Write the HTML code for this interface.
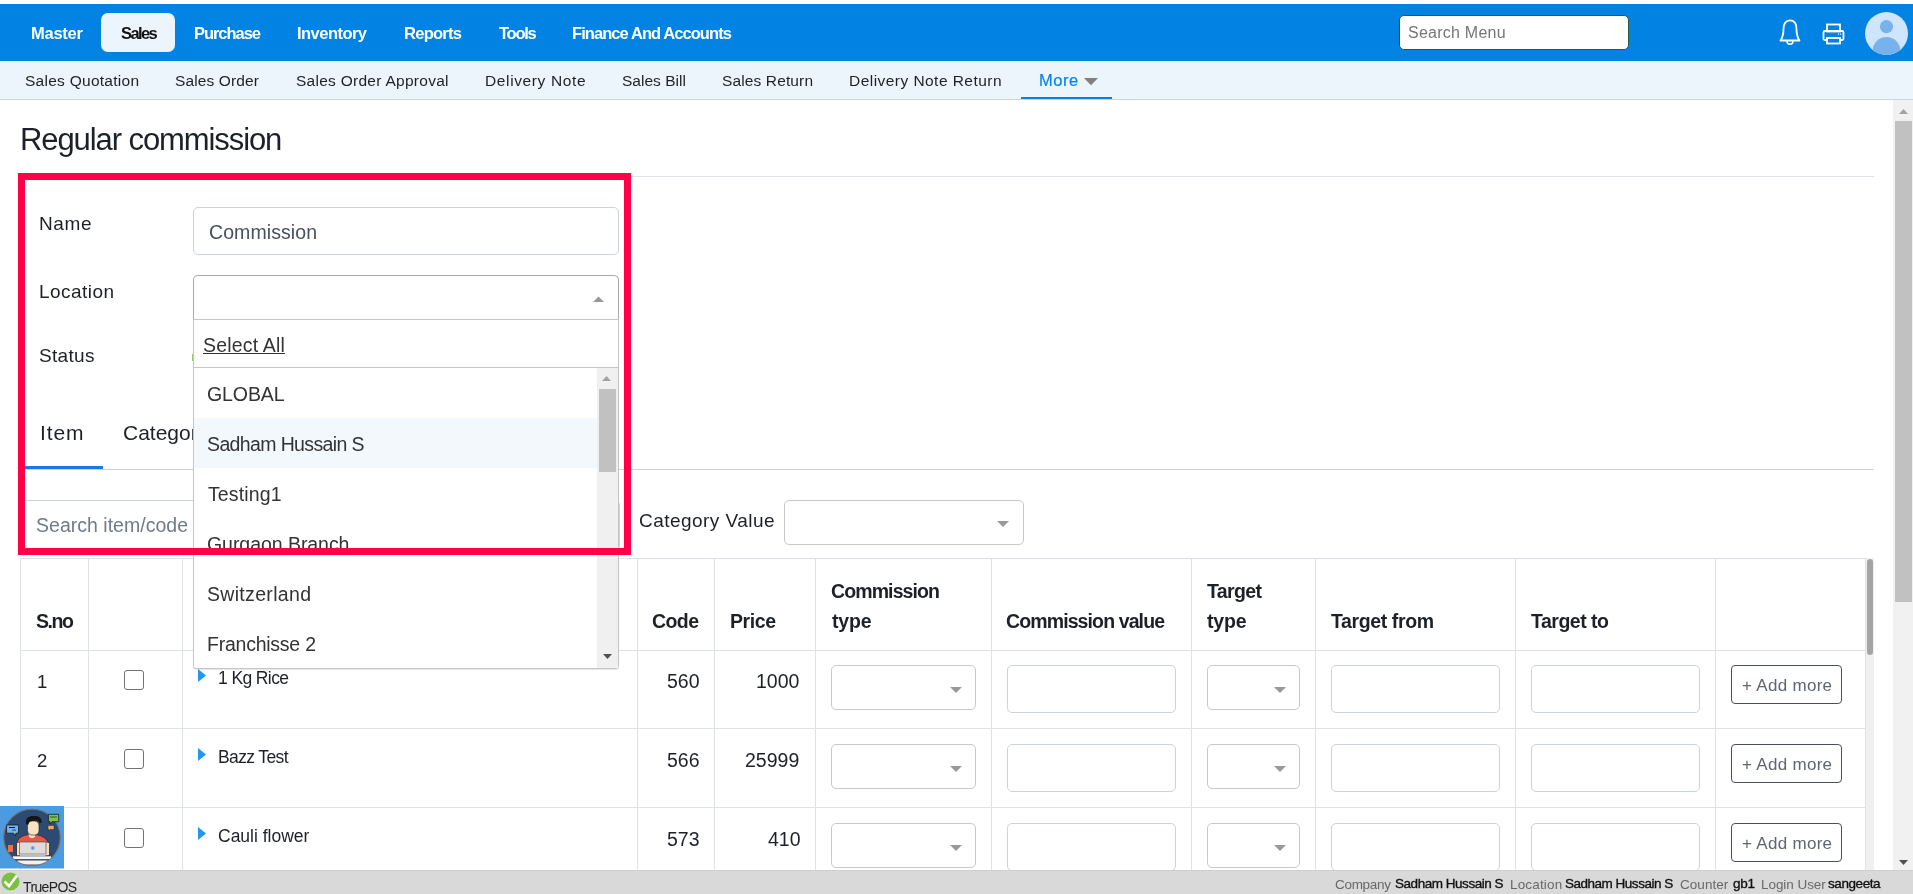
<!DOCTYPE html><html><head><meta charset="utf-8"><style>
html,body{margin:0;padding:0}
body{width:1913px;height:894px;overflow:hidden;position:relative;background:#fff;font-family:"Liberation Sans",sans-serif}
.a{position:absolute;box-sizing:border-box}
.t{position:absolute;white-space:nowrap;will-change:transform}
</style></head><body>
<div class="a" style="left:0px;top:4px;width:1913px;height:57px;background:#0283e4"></div>
<div class="a" style="left:101px;top:13px;width:74px;height:39px;background:#ecf4fc;border-radius:7px"></div>
<div class="t" style="left:31.00px;top:25.03px;font-size:16.5px;line-height:16.5px;font-weight:bold;letter-spacing:-0.243px;color:#ffffff;">Master</div>
<div class="t" style="left:194.00px;top:25.03px;font-size:16.5px;line-height:16.5px;font-weight:bold;letter-spacing:-1.047px;color:#ffffff;">Purchase</div>
<div class="t" style="left:297.00px;top:25.03px;font-size:16.5px;line-height:16.5px;font-weight:bold;letter-spacing:-0.531px;color:#ffffff;">Inventory</div>
<div class="t" style="left:404.00px;top:25.03px;font-size:16.5px;line-height:16.5px;font-weight:bold;letter-spacing:-0.728px;color:#ffffff;">Reports</div>
<div class="t" style="left:499.00px;top:25.03px;font-size:16.5px;line-height:16.5px;font-weight:bold;letter-spacing:-1.259px;color:#ffffff;">Tools</div>
<div class="t" style="left:572.00px;top:25.03px;font-size:16.5px;line-height:16.5px;font-weight:bold;letter-spacing:-0.928px;color:#ffffff;">Finance And Accounts</div>
<div class="t" style="left:121.00px;top:25.03px;font-size:16.5px;line-height:16.5px;font-weight:bold;letter-spacing:-1.612px;color:#111;">Sales</div>
<div class="a" style="left:1399px;top:15px;width:230px;height:35px;background:#fff;border:1px solid #2d5a43;border-radius:5px"></div>
<div class="t" style="left:1408.00px;top:25.26px;font-size:16px;line-height:16px;letter-spacing:0.240px;color:#757575;">Search Menu</div>
<svg class="a" style="left:1776px;top:17px" width="28" height="30" viewBox="0 0 28 30"><path d="M4.5 23.5 C7 20 7.5 17 7.5 12 C7.5 6.5 10 3.3 14 3.3 C18 3.3 20.5 6.5 20.5 12 C20.5 17 21 20 23.5 23.5 Z" fill="none" stroke="#fff" stroke-width="1.8" stroke-linejoin="round"/><path d="M11 24 A3 3.2 0 0 0 17 24" fill="none" stroke="#fff" stroke-width="1.6"/></svg>
<svg class="a" style="left:1820px;top:20px" width="28" height="28" viewBox="0 0 28 28"><rect x="7" y="4.5" width="13" height="7" fill="none" stroke="#fff" stroke-width="1.8"/><rect x="3.5" y="11" width="20" height="9" rx="1.5" fill="none" stroke="#fff" stroke-width="1.8"/><rect x="7" y="18" width="13" height="5.5" fill="#0283e4" stroke="#fff" stroke-width="1.8"/><rect x="18" y="13.5" width="1.2" height="1.2" fill="#fff"/><rect x="20" y="13.5" width="1.2" height="1.2" fill="#fff"/></svg>
<svg class="a" style="left:1865px;top:12px" width="43" height="43" viewBox="0 0 43 43"><defs><clipPath id="cc"><circle cx="21.5" cy="21.5" r="21.5"/></clipPath></defs><circle cx="21.5" cy="21.5" r="21.5" fill="#cfe5fb"/><g clip-path="url(#cc)"><circle cx="21.5" cy="14.6" r="6.6" fill="#78b2ec"/><ellipse cx="21.5" cy="39" rx="13.8" ry="14" fill="#78b2ec"/></g></svg>
<div class="a" style="left:0px;top:61px;width:1913px;height:39px;background:#ecf4fc;border-bottom:1px solid #c8d7e5"></div>
<div class="t" style="left:24.50px;top:72.88px;font-size:15.5px;line-height:15.5px;letter-spacing:0.266px;color:#1d2127;">Sales Quotation</div>
<div class="t" style="left:175.00px;top:72.88px;font-size:15.5px;line-height:15.5px;letter-spacing:0.131px;color:#1d2127;">Sales Order</div>
<div class="t" style="left:296.00px;top:72.88px;font-size:15.5px;line-height:15.5px;letter-spacing:0.272px;color:#1d2127;">Sales Order Approval</div>
<div class="t" style="left:485.00px;top:72.88px;font-size:15.5px;line-height:15.5px;letter-spacing:0.625px;color:#1d2127;">Delivery Note</div>
<div class="t" style="left:622.00px;top:72.88px;font-size:15.5px;line-height:15.5px;letter-spacing:0.024px;color:#1d2127;">Sales Bill</div>
<div class="t" style="left:722.00px;top:72.88px;font-size:15.5px;line-height:15.5px;letter-spacing:0.128px;color:#1d2127;">Sales Return</div>
<div class="t" style="left:848.80px;top:72.88px;font-size:15.5px;line-height:15.5px;letter-spacing:0.456px;color:#1d2127;">Delivery Note Return</div>
<div class="t" style="left:1039.00px;top:71.83px;font-size:16.5px;line-height:16.5px;letter-spacing:0.527px;color:#0883e8;-webkit-text-stroke:0.2px #0883e8;">More</div>
<svg class="a" style="left:1083px;top:77px" width="16" height="10" viewBox="0 0 16 10"><path d="M1 1 L15 1 L8 8.3 Z" fill="#808080"/></svg>
<div class="a" style="left:1021px;top:97px;width:91px;height:2px;background:#0a7ee2"></div>
<div class="a" style="left:1893px;top:100px;width:20px;height:770px;background:#f1f1f1"></div>
<div class="a" style="left:1895px;top:121px;width:17px;height:481px;background:#c1c1c1"></div>
<svg class="a" style="left:1898px;top:108px" width="11" height="7" viewBox="0 0 11 7"><path d="M1 6 L10 6 L5.5 1 Z" fill="#a3a3a3"/></svg>
<svg class="a" style="left:1898px;top:859px" width="11" height="7" viewBox="0 0 11 7"><path d="M1 1 L10 1 L5.5 6 Z" fill="#505050"/></svg>
<div class="t" style="left:19.90px;top:123.96px;font-size:31px;line-height:31px;letter-spacing:-1.086px;color:#1d2127;">Regular commission</div>
<div class="a" style="left:20px;top:176px;width:1854px;height:1px;background:#dfe4ea"></div>
<div class="t" style="left:38.50px;top:213.92px;font-size:19px;line-height:19px;letter-spacing:0.590px;color:#1d2127;">Name</div>
<div class="t" style="left:38.50px;top:281.92px;font-size:19px;line-height:19px;letter-spacing:0.454px;color:#1d2127;">Location</div>
<div class="t" style="left:38.50px;top:345.92px;font-size:19px;line-height:19px;letter-spacing:0.327px;color:#1d2127;">Status</div>
<div class="a" style="left:193px;top:207px;width:426px;height:48px;background:#fff;border:1px solid #ccd3da;border-radius:5px"></div>
<div class="t" style="left:209.00px;top:222.99px;font-size:19.5px;line-height:19.5px;letter-spacing:0.083px;color:#46515c;">Commission</div>
<div class="a" style="left:191.5px;top:354px;width:1.5px;height:7px;background:#8fd070"></div>
<div class="a" style="left:193px;top:275px;width:426px;height:46px;background:#fff;border:1px solid #aaa;border-bottom:none;border-radius:5px 5px 0 0"></div>
<svg class="a" style="left:592px;top:295px" width="13" height="8" viewBox="0 0 13 8"><path d="M1 7 L12 7 L6.5 1.5 Z" fill="#999"/></svg>
<div class="t" style="left:39.50px;top:421.72px;font-size:21px;line-height:21px;letter-spacing:0.885px;color:#1d2127;">Item</div>
<div class="t" style="left:123.00px;top:421.72px;font-size:21px;line-height:21px;color:#1d2127;">Category</div>
<div class="a" style="left:25px;top:469px;width:1849px;height:1px;background:#cfd3d7"></div>
<div class="a" style="left:25px;top:466px;width:78px;height:3px;background:#1977e6"></div>
<div class="a" style="left:20px;top:500px;width:600px;height:50px;background:#fff;border:1px solid #ccd3da;border-radius:5px"></div>
<div class="t" style="left:36.00px;top:516.29px;font-size:19.5px;line-height:19.5px;letter-spacing:0.019px;color:#6f7b87;">Search item/code</div>
<div class="t" style="left:639.00px;top:510.92px;font-size:19px;line-height:19px;letter-spacing:0.455px;color:#1d2127;">Category Value</div>
<div class="a" style="left:784px;top:500px;width:240px;height:45px;background:#fff;border:1px solid #c9c9c9;border-radius:5px"></div>
<svg class="a" style="left:996px;top:520px" width="14" height="8" viewBox="0 0 14 8"><path d="M1 1 L13 1 L7 7 Z" fill="#999"/></svg>
<div class="a" style="left:20px;top:558px;width:1px;height:312px;background:#dde2e8"></div>
<div class="a" style="left:88px;top:558px;width:1px;height:312px;background:#dde2e8"></div>
<div class="a" style="left:182px;top:558px;width:1px;height:312px;background:#dde2e8"></div>
<div class="a" style="left:637px;top:558px;width:1px;height:312px;background:#dde2e8"></div>
<div class="a" style="left:714px;top:558px;width:1px;height:312px;background:#dde2e8"></div>
<div class="a" style="left:815px;top:558px;width:1px;height:312px;background:#dde2e8"></div>
<div class="a" style="left:991px;top:558px;width:1px;height:312px;background:#dde2e8"></div>
<div class="a" style="left:1191px;top:558px;width:1px;height:312px;background:#dde2e8"></div>
<div class="a" style="left:1315px;top:558px;width:1px;height:312px;background:#dde2e8"></div>
<div class="a" style="left:1515px;top:558px;width:1px;height:312px;background:#dde2e8"></div>
<div class="a" style="left:1715px;top:558px;width:1px;height:312px;background:#dde2e8"></div>
<div class="a" style="left:1865px;top:558px;width:1px;height:312px;background:#dde2e8"></div>
<div class="a" style="left:20px;top:558px;width:1846px;height:1px;background:#dde2e8"></div>
<div class="a" style="left:20px;top:650px;width:1846px;height:1px;background:#dde2e8"></div>
<div class="a" style="left:20px;top:728px;width:1846px;height:1px;background:#dde2e8"></div>
<div class="a" style="left:20px;top:807px;width:1846px;height:1px;background:#dde2e8"></div>
<div class="t" style="left:36.00px;top:612.49px;font-size:19.5px;line-height:19.5px;font-weight:bold;letter-spacing:-1.473px;color:#1d2127;">S.no</div>
<div class="t" style="left:652.00px;top:612.49px;font-size:19.5px;line-height:19.5px;font-weight:bold;letter-spacing:-0.583px;color:#1d2127;">Code</div>
<div class="t" style="left:730.00px;top:612.49px;font-size:19.5px;line-height:19.5px;font-weight:bold;letter-spacing:-0.419px;color:#1d2127;">Price</div>
<div class="t" style="left:831.00px;top:582.49px;font-size:19.5px;line-height:19.5px;font-weight:bold;letter-spacing:-0.889px;color:#1d2127;">Commission</div>
<div class="t" style="left:832.00px;top:612.49px;font-size:19.5px;line-height:19.5px;font-weight:bold;letter-spacing:-0.191px;color:#1d2127;">type</div>
<div class="t" style="left:1006.00px;top:612.29px;font-size:19.5px;line-height:19.5px;font-weight:bold;letter-spacing:-0.885px;color:#1d2127;">Commission value</div>
<div class="t" style="left:1207.00px;top:582.49px;font-size:19.5px;line-height:19.5px;font-weight:bold;letter-spacing:-0.622px;color:#1d2127;">Target</div>
<div class="t" style="left:1207.00px;top:612.49px;font-size:19.5px;line-height:19.5px;font-weight:bold;letter-spacing:-0.191px;color:#1d2127;">type</div>
<div class="t" style="left:1331.00px;top:611.99px;font-size:19.5px;line-height:19.5px;font-weight:bold;letter-spacing:-0.386px;color:#1d2127;">Target from</div>
<div class="t" style="left:1530.50px;top:611.99px;font-size:19.5px;line-height:19.5px;font-weight:bold;letter-spacing:-0.500px;color:#1d2127;">Target to</div>
<div class="t" style="left:37.00px;top:672.84px;font-size:18.5px;line-height:18.5px;color:#1d2127;">1</div>
<div class="a" style="left:124px;top:670px;width:20px;height:20px;background:#fff;border:1px solid #737373;border-radius:3px"></div>
<svg class="a" style="left:197px;top:668px" width="10" height="15" viewBox="0 0 10 15"><path d="M1 1 L9 7.5 L1 14 Z" fill="#2196f3"/></svg>
<div class="t" style="left:217.50px;top:670.19px;font-size:17.5px;line-height:17.5px;letter-spacing:-0.608px;color:#1d2127;">1 Kg Rice</div>
<div class="t" style="left:666.93px;top:672.09px;font-size:19.5px;line-height:19.5px;color:#1d2127;">560</div>
<div class="t" style="left:756.11px;top:672.09px;font-size:19.5px;line-height:19.5px;color:#1d2127;">1000</div>
<div class="a" style="left:831px;top:665px;width:145px;height:45px;background:#fff;border:1px solid #c9c9c9;border-radius:5px"></div>
<svg class="a" style="left:949px;top:686px" width="14" height="8" viewBox="0 0 14 8"><path d="M1 1 L13 1 L7 7 Z" fill="#999"/></svg>
<div class="a" style="left:1207px;top:665px;width:93px;height:45px;background:#fff;border:1px solid #c9c9c9;border-radius:5px"></div>
<svg class="a" style="left:1273px;top:686px" width="14" height="8" viewBox="0 0 14 8"><path d="M1 1 L13 1 L7 7 Z" fill="#999"/></svg>
<div class="a" style="left:1007px;top:665px;width:169px;height:48px;background:#fff;border:1px solid #ccd3da;border-radius:5px"></div>
<div class="a" style="left:1331px;top:665px;width:169px;height:48px;background:#fff;border:1px solid #ccd3da;border-radius:5px"></div>
<div class="a" style="left:1531px;top:665px;width:169px;height:48px;background:#fff;border:1px solid #ccd3da;border-radius:5px"></div>
<div class="a" style="left:1731px;top:665px;width:111px;height:39px;background:#fff;border:1px solid #4a5058;border-radius:4px"></div>
<div class="t" style="left:1742.00px;top:676.61px;font-size:17px;line-height:17px;letter-spacing:0.291px;color:#5f666d;">+ Add more</div>
<div class="t" style="left:37.00px;top:751.84px;font-size:18.5px;line-height:18.5px;color:#1d2127;">2</div>
<div class="a" style="left:124px;top:749px;width:20px;height:20px;background:#fff;border:1px solid #737373;border-radius:3px"></div>
<svg class="a" style="left:197px;top:747px" width="10" height="15" viewBox="0 0 10 15"><path d="M1 1 L9 7.5 L1 14 Z" fill="#2196f3"/></svg>
<div class="t" style="left:217.50px;top:749.19px;font-size:17.5px;line-height:17.5px;letter-spacing:-0.627px;color:#1d2127;">Bazz Test</div>
<div class="t" style="left:666.93px;top:751.09px;font-size:19.5px;line-height:19.5px;color:#1d2127;">566</div>
<div class="t" style="left:745.29px;top:751.09px;font-size:19.5px;line-height:19.5px;color:#1d2127;">25999</div>
<div class="a" style="left:831px;top:744px;width:145px;height:45px;background:#fff;border:1px solid #c9c9c9;border-radius:5px"></div>
<svg class="a" style="left:949px;top:765px" width="14" height="8" viewBox="0 0 14 8"><path d="M1 1 L13 1 L7 7 Z" fill="#999"/></svg>
<div class="a" style="left:1207px;top:744px;width:93px;height:45px;background:#fff;border:1px solid #c9c9c9;border-radius:5px"></div>
<svg class="a" style="left:1273px;top:765px" width="14" height="8" viewBox="0 0 14 8"><path d="M1 1 L13 1 L7 7 Z" fill="#999"/></svg>
<div class="a" style="left:1007px;top:744px;width:169px;height:48px;background:#fff;border:1px solid #ccd3da;border-radius:5px"></div>
<div class="a" style="left:1331px;top:744px;width:169px;height:48px;background:#fff;border:1px solid #ccd3da;border-radius:5px"></div>
<div class="a" style="left:1531px;top:744px;width:169px;height:48px;background:#fff;border:1px solid #ccd3da;border-radius:5px"></div>
<div class="a" style="left:1731px;top:744px;width:111px;height:39px;background:#fff;border:1px solid #4a5058;border-radius:4px"></div>
<div class="t" style="left:1742.00px;top:755.61px;font-size:17px;line-height:17px;letter-spacing:0.291px;color:#5f666d;">+ Add more</div>
<div class="t" style="left:37.00px;top:830.84px;font-size:18.5px;line-height:18.5px;color:#1d2127;">3</div>
<div class="a" style="left:124px;top:828px;width:20px;height:20px;background:#fff;border:1px solid #737373;border-radius:3px"></div>
<svg class="a" style="left:197px;top:826px" width="10" height="15" viewBox="0 0 10 15"><path d="M1 1 L9 7.5 L1 14 Z" fill="#2196f3"/></svg>
<div class="t" style="left:217.50px;top:827.69px;font-size:17.5px;line-height:17.5px;color:#1d2127;">Cauli flower</div>
<div class="t" style="left:666.93px;top:830.09px;font-size:19.5px;line-height:19.5px;color:#1d2127;">573</div>
<div class="t" style="left:767.93px;top:830.09px;font-size:19.5px;line-height:19.5px;color:#1d2127;">410</div>
<div class="a" style="left:831px;top:823px;width:145px;height:45px;background:#fff;border:1px solid #c9c9c9;border-radius:5px"></div>
<svg class="a" style="left:949px;top:844px" width="14" height="8" viewBox="0 0 14 8"><path d="M1 1 L13 1 L7 7 Z" fill="#999"/></svg>
<div class="a" style="left:1207px;top:823px;width:93px;height:45px;background:#fff;border:1px solid #c9c9c9;border-radius:5px"></div>
<svg class="a" style="left:1273px;top:844px" width="14" height="8" viewBox="0 0 14 8"><path d="M1 1 L13 1 L7 7 Z" fill="#999"/></svg>
<div class="a" style="left:1007px;top:823px;width:169px;height:48px;background:#fff;border:1px solid #ccd3da;border-radius:5px"></div>
<div class="a" style="left:1331px;top:823px;width:169px;height:48px;background:#fff;border:1px solid #ccd3da;border-radius:5px"></div>
<div class="a" style="left:1531px;top:823px;width:169px;height:48px;background:#fff;border:1px solid #ccd3da;border-radius:5px"></div>
<div class="a" style="left:1731px;top:823px;width:111px;height:39px;background:#fff;border:1px solid #4a5058;border-radius:4px"></div>
<div class="t" style="left:1742.00px;top:834.61px;font-size:17px;line-height:17px;letter-spacing:0.291px;color:#5f666d;">+ Add more</div>
<div class="a" style="left:1866px;top:558px;width:8px;height:312px;background:#f0f0f0"></div>
<div class="a" style="left:1867px;top:559px;width:6px;height:96px;background:#a4a4a4;border-radius:3px"></div>
<div class="a" style="left:193px;top:319px;width:426px;height:350px;background:#fff;border:1px solid #c6c6c6;border-radius:0 0 3px 3px;box-shadow:0 1px 1px rgba(0,0,0,0.10)"></div>
<div class="t" style="left:202.80px;top:336.29px;font-size:19.5px;line-height:19.5px;letter-spacing:0.173px;color:#333;text-decoration:underline;">Select All</div>
<div class="a" style="left:194px;top:367px;width:424px;height:1px;background:#c6c6c6"></div>
<div class="a" style="left:194px;top:418px;width:403px;height:50px;background:#f3f8fd"></div>
<div class="t" style="left:206.50px;top:385.29px;font-size:19.5px;line-height:19.5px;letter-spacing:-0.100px;color:#333;">GLOBAL</div>
<div class="t" style="left:206.50px;top:434.99px;font-size:19.5px;line-height:19.5px;letter-spacing:-0.628px;color:#333;">Sadham Hussain S</div>
<div class="t" style="left:207.50px;top:484.99px;font-size:19.5px;line-height:19.5px;letter-spacing:0.123px;color:#333;">Testing1</div>
<div class="t" style="left:206.50px;top:534.99px;font-size:19.5px;line-height:19.5px;letter-spacing:-0.048px;color:#333;">Gurgaon Branch</div>
<div class="t" style="left:206.50px;top:585.29px;font-size:19.5px;line-height:19.5px;letter-spacing:0.318px;color:#333;">Switzerland</div>
<div class="t" style="left:206.50px;top:634.99px;font-size:19.5px;line-height:19.5px;letter-spacing:-0.240px;color:#333;">Franchisse 2</div>
<div class="a" style="left:597px;top:368px;width:21px;height:300px;background:#f0f0f0"></div>
<div class="a" style="left:599px;top:389px;width:17px;height:83px;background:#c1c1c1"></div>
<svg class="a" style="left:601px;top:375px" width="11" height="7" viewBox="0 0 11 7"><path d="M1 6 L10 6 L5.5 1 Z" fill="#a3a3a3"/></svg>
<svg class="a" style="left:602px;top:653px" width="11" height="7" viewBox="0 0 11 7"><path d="M1 1 L10 1 L5.5 6 Z" fill="#505050"/></svg>
<div class="a" style="left:18px;top:173px;width:613px;height:382px;border:7px solid #ff0049"></div>
<svg class="a" style="left:0px;top:806px" width="64" height="63" viewBox="0 0 64 63"><rect width="64" height="62.5" fill="#4b9be0"/><defs><clipPath id="ac"><circle cx="32" cy="31.4" r="28"/></clipPath></defs><circle cx="32" cy="31.4" r="28.2" fill="#2c4a72" stroke="#7a6f6a" stroke-width="1.1"/><g clip-path="url(#ac)">
<path d="M16.5 50 L17 37 C18 31 24 28.5 32 28.5 C40 28.5 46 31 48.5 37 L49 50 Z" fill="#e2594b" stroke="#222" stroke-width="0.6"/>
<rect x="17" y="37" width="4" height="12" fill="#f6e0b8"/><rect x="45" y="37" width="4" height="12" fill="#f6e0b8"/>
<path d="M28.5 27 L35.5 27 L35 31 C33.5 32.5 30.5 32.5 29 31 Z" fill="#f6e0b8"/>
<rect x="27.5" y="15" width="11.5" height="14" rx="4.5" fill="#f8e4c0" stroke="#222" stroke-width="0.6"/>
<path d="M26 18 C25 11 30 9.5 34 10 C39 9.5 42 12 41.5 17 L39.5 17 C39 15 37 14.5 35 14.5 L29.5 15.5 L28 19 Z" fill="#151515"/>
<rect x="19.5" y="36" width="26.5" height="12" fill="#dcdcdc" stroke="#444" stroke-width="0.6"/>
<circle cx="32.8" cy="42" r="1.8" fill="#4aa0e8"/>
<rect x="20" y="47.5" width="25.5" height="2.5" fill="#bdbdbd"/>
<rect x="13" y="50.3" width="38" height="3" fill="#f7f7f7"/><rect x="13" y="53.3" width="38" height="1.2" fill="#444"/><rect x="17.5" y="54.5" width="30" height="4" fill="#f2f2f2"/>
<rect x="8" y="39" width="5" height="7" fill="#e8734a"/>
</g>
<path d="M6.6 19 H18.5 V27.2 H16 L15 30 L13.5 27.2 H6.6 Z" fill="#74b4ef" stroke="#1a1a1a" stroke-width="0.8"/><rect x="9" y="21" width="6" height="1" fill="#111"/><rect x="12" y="23.5" width="4" height="1.2" fill="#2c6b3a"/>
<path d="M48.4 8.3 H58.7 V15.7 H52 L50 18 L50 15.7 H48.4 Z" fill="#7cc24b" stroke="#1a1a1a" stroke-width="0.8"/><rect x="50" y="10.5" width="7" height="1" fill="#2a5a2a"/>
<path d="M48 19.5 H54 V23.5 H50 L49 25 L49 23.5 H48 Z" fill="#eba85a" stroke="#333" stroke-width="0.5"/>
</svg>
<div class="a" style="left:0px;top:870px;width:1913px;height:24px;background:#d9d9d9;border-top:1px solid #cfcfcf"></div>
<svg class="a" style="left:0px;top:871px" width="22" height="22" viewBox="0 0 22 22"><circle cx="10.5" cy="10.5" r="9" fill="#7bc043"/><path d="M4.5 10.5 L9 15 L17 4.5" fill="none" stroke="#fff" stroke-width="2.6"/></svg>
<div class="t" style="left:23.00px;top:880.15px;font-size:14px;line-height:14px;letter-spacing:-0.637px;color:#222;">TruePOS</div>
<div class="t" style="left:1335.00px;top:877.97px;font-size:13.5px;line-height:13.5px;letter-spacing:-0.297px;color:#686868;">Company</div>
<div class="t" style="left:1395.40px;top:876.97px;font-size:13.5px;line-height:13.5px;letter-spacing:-0.464px;color:#111;-webkit-text-stroke:0.35px #111;">Sadham Hussain S</div>
<div class="t" style="left:1509.80px;top:877.97px;font-size:13.5px;line-height:13.5px;letter-spacing:0.167px;color:#686868;">Location</div>
<div class="t" style="left:1565.20px;top:876.97px;font-size:13.5px;line-height:13.5px;letter-spacing:-0.491px;color:#111;-webkit-text-stroke:0.35px #111;">Sadham Hussain S</div>
<div class="t" style="left:1679.80px;top:877.97px;font-size:13.5px;line-height:13.5px;letter-spacing:0.057px;color:#686868;">Counter</div>
<div class="t" style="left:1733.20px;top:876.97px;font-size:13.5px;line-height:13.5px;letter-spacing:-0.273px;color:#111;-webkit-text-stroke:0.35px #111;">gb1</div>
<div class="t" style="left:1760.60px;top:877.97px;font-size:13.5px;line-height:13.5px;letter-spacing:-0.053px;color:#686868;">Login User</div>
<div class="t" style="left:1828.20px;top:876.97px;font-size:13.5px;line-height:13.5px;letter-spacing:-0.417px;color:#111;-webkit-text-stroke:0.35px #111;">sangeeta</div>
</body></html>
